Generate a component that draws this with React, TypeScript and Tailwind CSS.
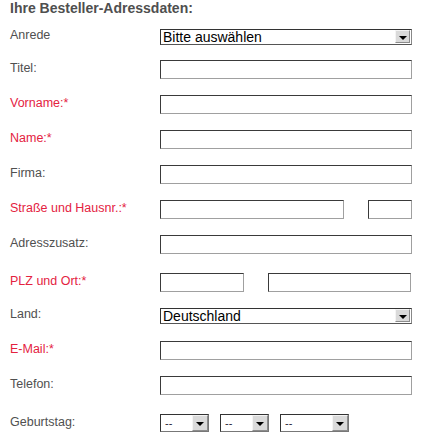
const labelBase = 'w-[150px] shrink-0 pb-[3px] text-[12.5px] leading-[14px]'

function Label({ text, required }: { text: string; required?: boolean }) {
  return (
    <div className={`${labelBase} ${required ? 'text-[#e4223f]' : 'text-[#505050]'}`}>
      {text}
    </div>
  )
}

function Field({ w }: { w: string }) {
  return (
    <div
      className={`${w} h-[19px] border border-t-[#3a3a3a] border-l-[#3a3a3a] border-b-[#a0a0a0] border-r-[#a0a0a0] bg-white`}
    />
  )
}

function Arrow({ box }: { box: string }) {
  return (
    <div
      className={`${box} flex items-center justify-center border border-t-[#f4f4f4] border-l-[#f4f4f4] border-b-[#8c8c8c] border-r-[#8c8c8c] bg-[#dadada]`}
    >
      <div className="w-0 h-0 mt-[2px] border-l-[4px] border-r-[4px] border-t-[4px] border-l-transparent border-r-transparent border-t-black" />
    </div>
  )
}

function Select({ value }: { value: string }) {
  return (
    <div className="w-[252px] h-[16px] flex items-center justify-between border border-t-[#333] border-l-[#333] border-b-[#555] border-r-[#888] bg-white">
      <span className="pl-[2px] text-[14px] leading-none text-black">{value}</span>
      <div className="mr-[1px]">
        <Arrow box="w-[15px] h-[13px]" />
      </div>
    </div>
  )
}

function SmallSelect({ w }: { w: string }) {
  return (
    <div className={`${w} h-[18px] flex items-center justify-between border border-t-[#333] border-l-[#333] border-b-[#777] border-r-[#777] bg-white`}>
      <span className="pl-[4px] text-[11px] leading-none text-[#223]">--</span>
      <Arrow box="w-[16px] h-[16px]" />
    </div>
  )
}

export default function App() {
  return (
    <div className="w-[423px] h-[445px] overflow-hidden bg-white pl-[10px] font-['Liberation_Sans',Arial,sans-serif]">
      <h2 className="pt-[1px] h-[20px] text-[14px] leading-[14px] font-bold text-[#4f4f4f]">
        Ihre Besteller-Adressdaten:
      </h2>

      <div className="flex h-[33px] items-center">
        <Label text="Anrede" />
        <Select value="Bitte auswählen" />
      </div>
      <div className="flex h-[33px] items-center">
        <Label text="Titel:" />
        <Field w="w-[252px]" />
      </div>
      <div className="flex h-[36px] items-center">
        <Label text="Vorname:*" required />
        <Field w="w-[252px]" />
      </div>
      <div className="flex h-[34px] items-center">
        <Label text="Name:*" required />
        <Field w="w-[252px]" />
      </div>
      <div className="flex h-[36px] items-center">
        <Label text="Firma:" />
        <Field w="w-[252px]" />
      </div>
      <div className="flex h-[35px] items-center">
        <Label text="Straße und Hausnr.:*" required />
        <div className="flex gap-[24px]">
          <Field w="w-[184px]" />
          <Field w="w-[44px]" />
        </div>
      </div>
      <div className="flex h-[35px] items-center">
        <Label text="Adresszusatz:" />
        <Field w="w-[252px]" />
      </div>
      <div className="flex h-[40px] items-center">
        <Label text="PLZ und Ort:*" required />
        <div className="flex gap-[24px]">
          <Field w="w-[84px]" />
          <Field w="w-[143px]" />
        </div>
      </div>
      <div className="flex h-[27px] items-center">
        <Label text="Land:" />
        <Select value="Deutschland" />
      </div>
      <div className="flex h-[42px] items-center">
        <Label text="E-Mail:*" required />
        <Field w="w-[252px]" />
      </div>
      <div className="flex h-[28px] items-center">
        <Label text="Telefon:" />
        <Field w="w-[252px]" />
      </div>
      <div className="flex h-[48px] items-center">
        <Label text="Geburtstag:" />
        <div className="flex gap-[11px]">
          <SmallSelect w="w-[49px]" />
          <SmallSelect w="w-[49px]" />
          <SmallSelect w="w-[69px]" />
        </div>
      </div>
    </div>
  )
}
